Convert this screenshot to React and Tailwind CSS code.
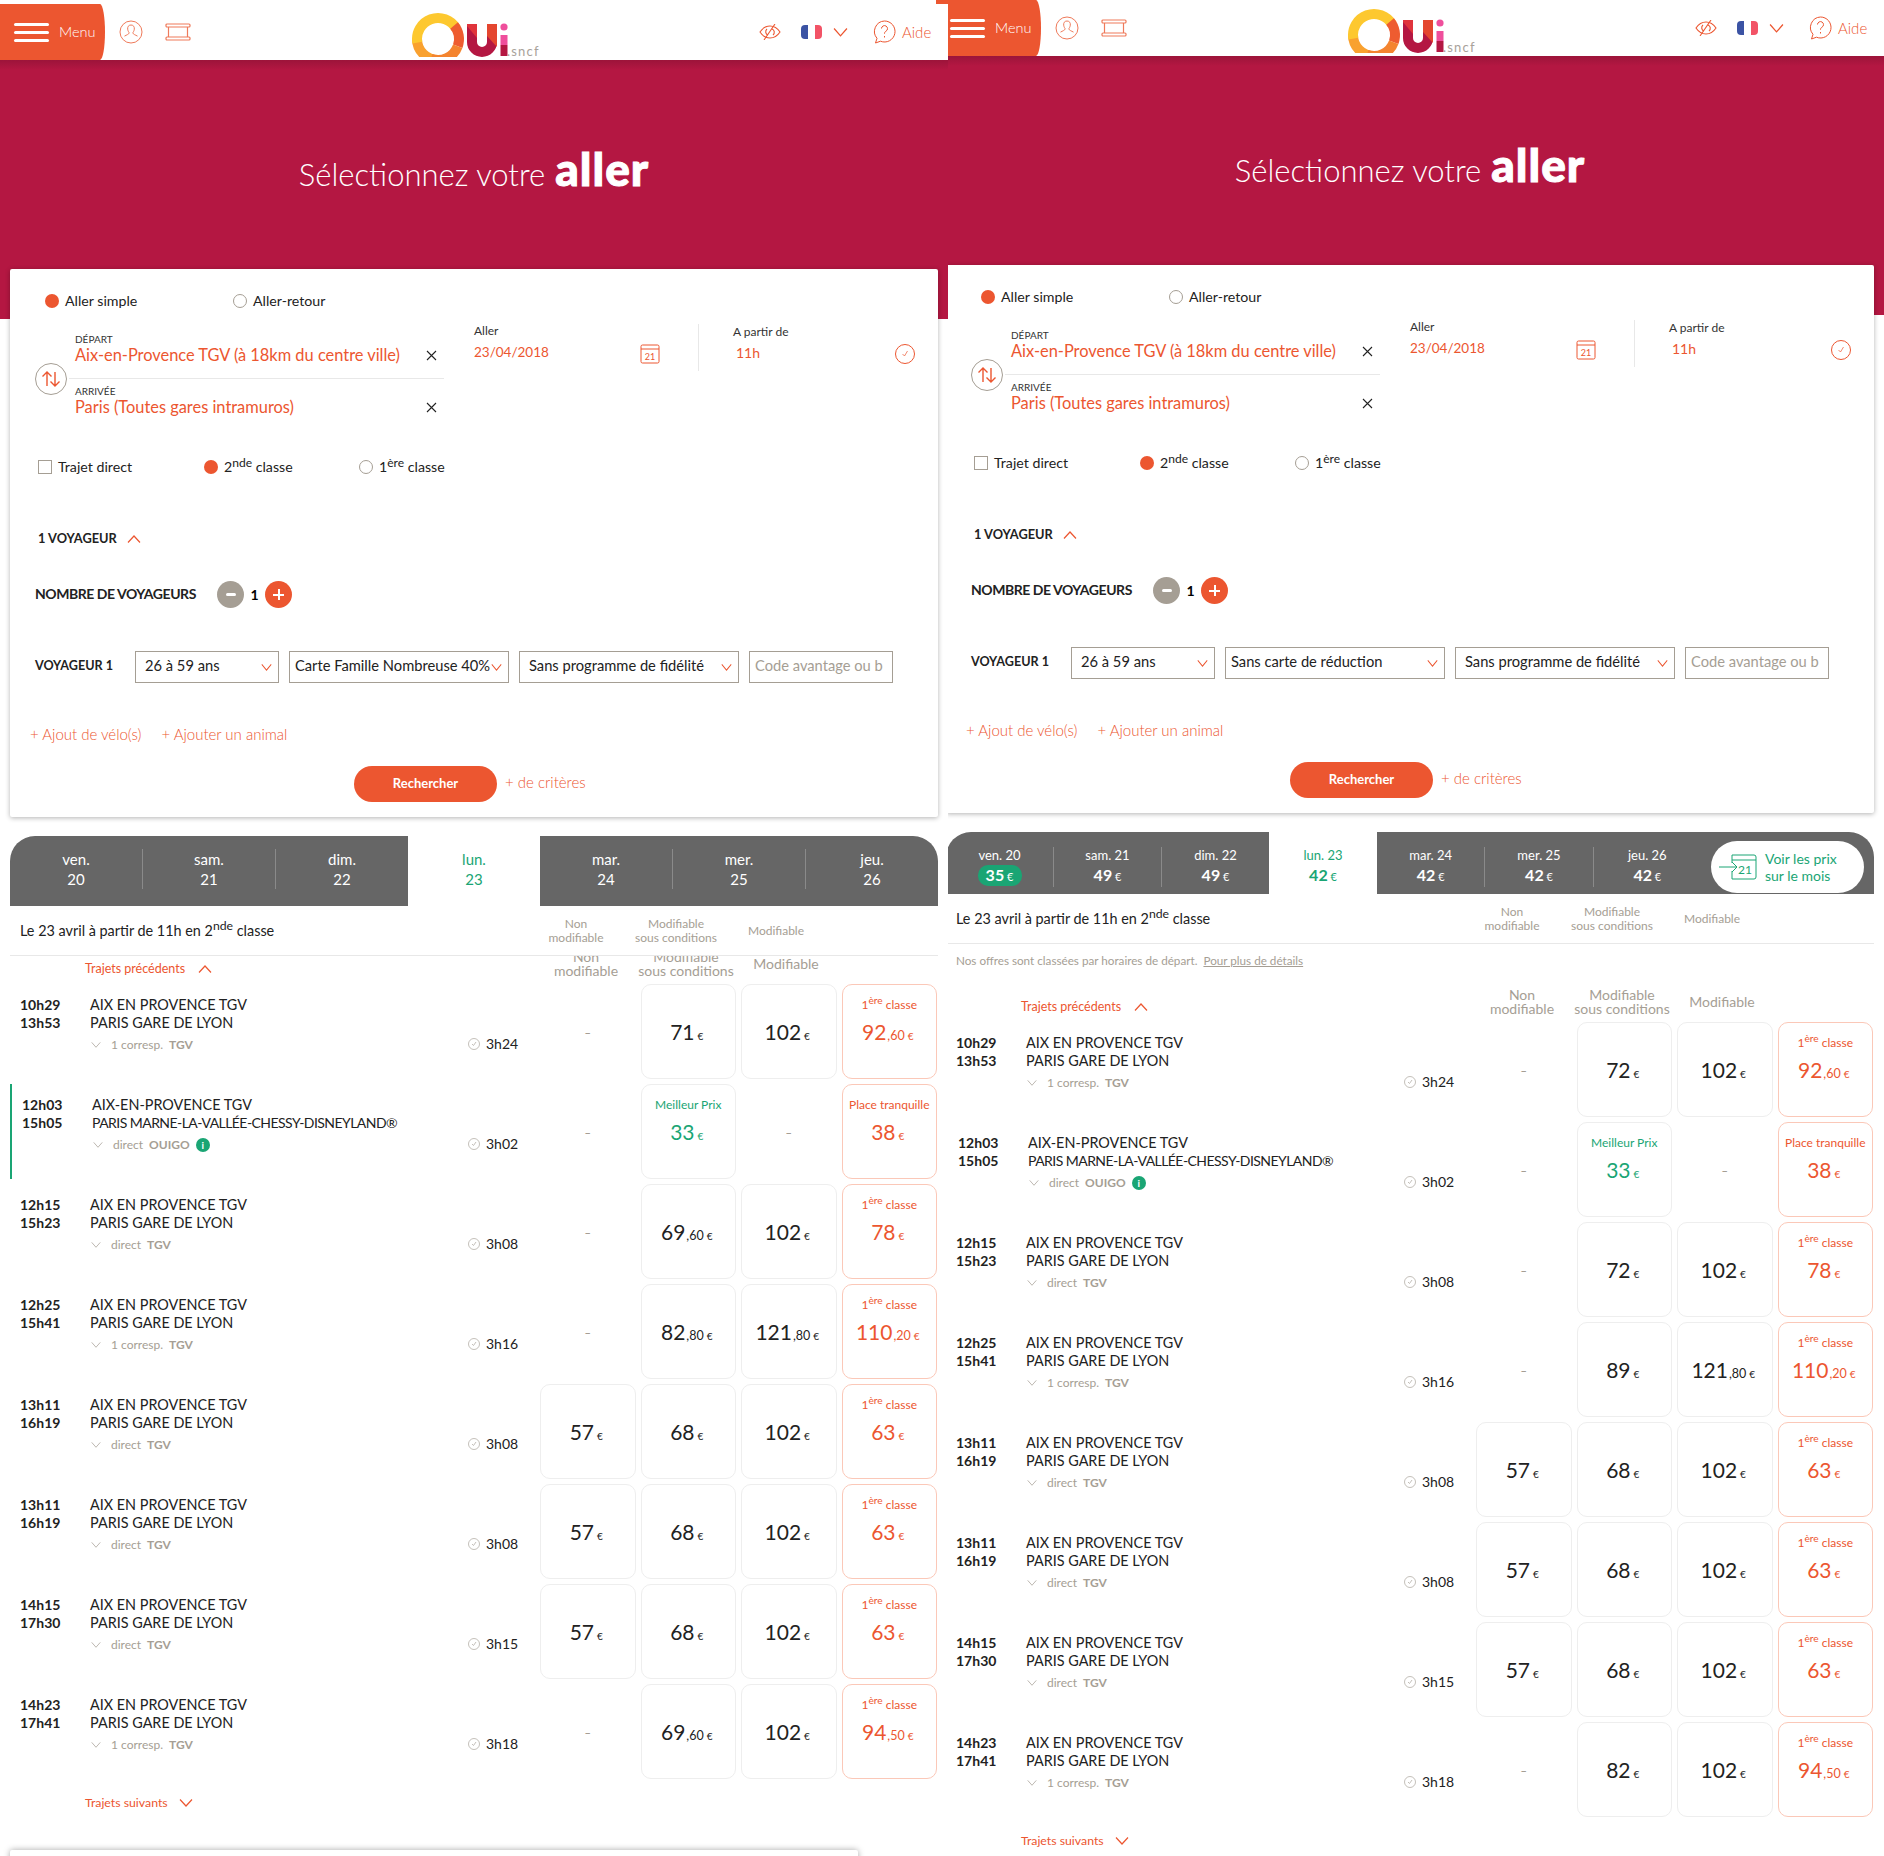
import React from "react";

const Chev = ({ up, w = 14, h = 8, c = "#ec5630", sw = 1.2, className = "" }) => (
  <svg width={w} height={h} viewBox="0 0 14 8" fill="none" preserveAspectRatio="none" className={className}>
    <path d={up ? "M1 7.5 7 1l6 6.5" : "M1 .5 7 7l6-6.5"} stroke={c} strokeWidth={sw} />
  </svg>
);
const Radio = ({ on }) =>
  on ? <span className="block w-[14px] h-[14px] rounded-full bg-[#ec5630] shrink-0" /> : <span className="block w-[14px] h-[14px] rounded-full border border-[#a59e94] shrink-0" />;
const Cross = () => (
  <svg width="11" height="11" viewBox="0 0 11 11" fill="none"><path d="M1 1l9 9M10 1l-9 9" stroke="#222" strokeWidth="1.1" /></svg>
);
const Sup = ({ children }) => <sup className="text-[0.85em] align-baseline relative -top-[0.45em]">{children}</sup>;

function Logo() {
  const arc = (a, b, col) => {
    const r = 21, cx = 28, cy = 27;
    const p = (t) => [cx + r * Math.cos((t * Math.PI) / 180), cy + r * Math.sin((t * Math.PI) / 180)];
    const [x1, y1] = p(a), [x2, y2] = p(b);
    return <path d={`M${x1} ${y1}A${r} ${r} 0 ${b - a > 180 ? 1 : 0} 1 ${x2} ${y2}`} stroke={col} strokeWidth="10" fill="none" />;
  };
  return (
    <svg width="130" height="45" viewBox="0 0 130 45" className="block overflow-visible">
      <defs><clipPath id="lg"><rect width="130" height="45" /></clipPath></defs>
      <g clipPath="url(#lg)">
        {arc(90, 180, "#f9a12f")}
        {arc(170, 330, "#fdc82f")}
        {arc(-40, 20, "#ee5c30")}
        {arc(20, 110, "#f4842f")}
        <path d="M62 12V30a10 10 0 0 0 20 0V12" stroke="#b41742" strokeWidth="10" fill="none" />
        <path d="M77 12h10v23l-10-11z" fill="#e4462f" />
        <path d="M57 14l10 12v-14H57z" fill="#e0343c" />
        <circle cx="94" cy="15" r="3.6" fill="#ef4f9c" />
        <rect x="90.5" y="23" width="7" height="10" fill="#ef4f9c" />
        <rect x="90.5" y="33" width="7" height="11" fill="#b41742" />
      </g>
      <text x="97" y="43.5" fontSize="13" letterSpacing="1.2" fill="#a8a29a" fontFamily="Lato, sans-serif">.sncf</text>
    </svg>
  );
}

function Header() {
  return (
    <div className="h-[56px] bg-white flex items-center relative z-10">
      <div className="h-full w-[105px] bg-[#ec5630] [border-radius:0_5px_5px_0/0_50%_50%_0] flex items-center pl-[14px] gap-[10px]">
        <div className="flex flex-col gap-[5px] w-[35px]">
          <span className="h-[3px] rounded bg-white" /><span className="h-[3px] rounded bg-white" /><span className="h-[3px] rounded bg-white" />
        </div>
        <span className="text-white text-[14.5px] font-light">Menu</span>
      </div>
      <svg width="24" height="24" viewBox="0 0 24 24" fill="none" stroke="#ef7a5a" strokeWidth="1" className="ml-[14px]">
        <circle cx="12" cy="12" r="11" /><path d="M12 5c-2.6 0-3.6 2-3.3 4.2.2 1.6 1 3 1.6 3.7-.6 1.4-2.500 2-4.800 3.200M12 5c2.6 0 3.600 2 3.300 4.200-.2 1.600-1 3-1.600 3.700.6 1.400 2.500 2 4.800 3.200" />
      </svg>
      <svg width="26" height="18" viewBox="0 0 26 18" fill="none" stroke="#ef7a5a" strokeWidth="1.200" className="ml-[22px]">
        <rect x="1" y="1" width="24" height="3" rx="1" /><rect x="1" y="14" width="24" height="3" rx="1" /><path d="M3.500 4v10M22.500 4v10" />
      </svg>
      <div className="ml-[219px] mt-[5px]"><Logo /></div>
      <svg width="22" height="16" viewBox="0 0 22 16" fill="none" stroke="#ec5630" strokeWidth="1.100" className="ml-[219px]">
        <path d="M1 8c3-4.500 6.500-6 10-6s7 1.500 10 6c-3 4.500-6.500 6-10 6S4 12.500 1 8z" /><path d="M8 5a3.500 3.500 0 0 0 1 6M14 11a3.500 3.500 0 0 0-1-6" /><path d="M16 0 5 16" />
      </svg>
      <div className="ml-[20px] w-[21px] h-[14px] rounded-[4px] overflow-hidden flex">
        <span className="flex-1 bg-[#3b53a4]" /><span className="flex-1 bg-white" /><span className="flex-1 bg-[#f25366]" />
      </div>
      <Chev w={15} h={9} className="ml-[11px]" />
      <svg width="23" height="24" viewBox="0 0 23 24" fill="none" stroke="#ec5630" strokeWidth="1" className="ml-[25px]">
        <path d="M11.500 1a10.500 10.500 0 1 1-4 20.200L2.500 23l1.500-4.700A10.500 10.500 0 0 1 11.500 1z" />
        <path d="M8.500 8.500a3 3 0 1 1 4.500 2.700c-1 .6-1.500 1.200-1.500 2.500M11.500 16v1.500" />
      </svg>
      <span className="ml-[6px] text-[15px] text-[#ec5630] font-light">Aide</span>
    </div>
  );
}

function Hero() {
  return (
    <div className="h-[259px] bg-[#b41742] bg-[linear-gradient(#9c143a,#b41742_10px)] flex items-center justify-center pb-[36px]">
      <div className="flex items-baseline gap-[10px] text-white">
        <span className="text-[31px] font-light">Sélectionnez votre</span>
        <span className="text-[46px] font-black leading-none tracking-[1px] [-webkit-text-stroke:1px_white]">aller</span>
      </div>
    </div>
  );
}

const Sel = ({ w, children, px = "pl-[9px]" }) => (
  <div className={`h-[32px] border border-[#a59e94] flex items-center justify-between pr-[6px] text-[14.7px] text-[#222] ${px} ${w}`}>
    <span className="whitespace-nowrap -mt-[3px]">{children}</span>
    <Chev w={11} h={7} />
  </div>
);

function SearchCard({ carte }) {
  return (
    <div className="mx-[10px] -mt-[50px] relative z-10 bg-white rounded-[2px] shadow-[0_1px_5px_rgba(0,0,0,0.3)] flex flex-col h-[548px]">
      <div className="mt-[22px] ml-[35px] h-[20px] flex items-center text-[14.2px] text-[#222]">
        <div className="w-[188px] flex items-center gap-[6px]"><Radio on />Aller simple</div>
        <div className="flex items-center gap-[6px]"><Radio />Aller-retour</div>
      </div>
      <div className="mt-[13px] flex">
        <div className="relative ml-[25px] w-[409px] pl-[34px]">
          <div className="mt-[9px] h-[12px] text-[10px] leading-[12px] pl-[6px] text-[#333]">DÉPART</div>
          <div className="h-[20px] flex items-center justify-between pl-[6px] pr-[7px] text-[16.4px] leading-[18px] text-[#ec5630]">
            <span className="whitespace-nowrap -mt-[1px]">Aix-en-Provence TGV (à 18km du centre ville)</span><Cross />
          </div>
          <div className="mt-[13px] h-px bg-[#e8e8e8]" />
          <div className="mt-[6px] h-[12px] text-[10px] leading-[12px] pl-[6px] text-[#333]">ARRIVÉE</div>
          <div className="h-[20px] flex items-center justify-between pl-[6px] pr-[7px] text-[16.4px] leading-[18px] text-[#ec5630]">
            <span className="-mt-[1px]">Paris (Toutes gares intramuros)</span><Cross />
          </div>
          <div className="absolute left-0 top-[39px] w-[32px] h-[32px] rounded-full border border-[#a59e94] bg-white flex items-center justify-center">
            <svg width="20" height="18" viewBox="0 0 20 18" fill="none" stroke="#ec5630" strokeWidth="1.400">
              <path d="M6 16V2M1.500 6.500 6 2l4.500 4.500M14 2v14M9.500 11.500 14 16l4.500-4.500" />
            </svg>
          </div>
        </div>
        <div className="ml-[30px] w-[224px] flex flex-col">
          <div className="h-[14px] text-[12px] leading-[14px] text-[#333]">Aller</div>
          <div className="mt-[6px] h-[20px] flex items-center justify-between pr-[38px] text-[13.5px] text-[#ec5630]">
            <span className="-mt-[3px]">23/04/2018</span>
            <svg width="20" height="20" viewBox="0 0 20 20" fill="none" stroke="#ec5630" strokeWidth="1"><rect x="1" y="1" width="18" height="18" rx="1.500" /><path d="M1 5h18" /><text x="10" y="15.500" fontSize="9" textAnchor="middle" fill="#ec5630" stroke="none" fontFamily="Lato, sans-serif">21</text></svg>
          </div>
        </div>
        <div className="w-px h-[47px] bg-[#e8e8e8]" />
        <div className="pl-[34px] w-[216px]">
          <div className="h-[14px] text-[12px] leading-[16px] text-[#333]">A partir de</div>
          <div className="mt-[6px] h-[20px] pl-[3px] flex items-center justify-between text-[14px] text-[#ec5630]">
            <span className="-mt-[3px]">11h</span>
            <svg width="20" height="20" viewBox="0 0 20 20" fill="none" stroke="#ec5630" strokeWidth="1"><circle cx="10" cy="10" r="9.500" /><path d="M7.500 10 9.500 12 12.500 7" strokeWidth=".7" /></svg>
          </div>
        </div>
      </div>
      <div className="mt-[40px] ml-[28px] h-[20px] flex items-center text-[14.2px] text-[#222]">
        <div className="w-[166px] flex items-center gap-[6px]"><span className="w-[14px] h-[14px] border border-[#a59e94]" />Trajet direct</div>
        <div className="w-[155px] flex items-center gap-[6px]"><Radio on /><span>2<Sup>nde</Sup> classe</span></div>
        <div className="flex items-center gap-[6px]"><Radio /><span>1<Sup>ère</Sup> classe</span></div>
      </div>
      <div className="mt-[54px] ml-[28px] h-[16px] flex items-center gap-[10px] text-[12.8px] font-bold text-[#222]">1 VOYAGEUR <Chev up w={14} h={8} /></div>
      <div className="mt-[34px] ml-[25px] h-[27px] flex items-center">
        <div className="w-[182px] text-[14px] font-bold text-[#222] tracking-[-0.45px] -mt-[3px]">NOMBRE DE VOYAGEURS</div>
        <div className="w-[27px] h-[27px] rounded-full bg-[#a59e94] flex items-center justify-center"><span className="w-[10px] h-[3px] bg-white rounded" /></div>
        <span className="w-[21px] text-center text-[14px] font-bold">1</span>
        <div className="w-[27px] h-[27px] rounded-full bg-[#ec5630] relative flex items-center justify-center">
          <span className="w-[11px] h-[2px] bg-white" /><span className="absolute w-[2px] h-[11px] bg-white" />
        </div>
      </div>
      <div className="mt-[43px] ml-[25px] h-[32px] flex items-center gap-[10px]">
        <div className="w-[90px] text-[12.6px] font-bold text-[#222] -mt-[2px]">VOYAGEUR 1</div>
        <Sel w="w-[144px]">26 à 59 ans</Sel>
        <Sel w="w-[220px]" px="pl-[5px]">{carte}</Sel>
        <Sel w="w-[220px]">Sans programme de fidélité</Sel>
        <div className="w-[144px] h-[32px] border border-[#a59e94] flex items-center pb-[3px] pl-[5px] text-[14.7px] text-[#a59e94] whitespace-nowrap overflow-hidden">Code avantage ou b</div>
      </div>
      <div className="mt-[41px] ml-[20px] h-[20px] flex items-center gap-[20px] text-[15px] text-[#ec5630] font-light">
        <span>+ Ajout de vélo(s)</span><span>+ Ajouter un animal</span>
      </div>
      <div className="mt-[22px] ml-[344px] flex items-center gap-[8px]">
        <div className="w-[143px] h-[36px] rounded-[18px] bg-[#ec5630] text-white text-[13px] font-bold flex items-center justify-center">Rechercher</div>
        <span className="text-[15px] text-[#ec5630] font-light -mt-[3px]">+ de critères</span>
      </div>
    </div>
  );
}

const Div = ({ low }) => <div className={`w-px h-[40px] bg-[#8a8a8a] shrink-0 ${low ? "mt-[8px]" : ""}`} />;
const Eu = ({ v }) => <span className="text-[16px] font-bold leading-none">{v}<span className="text-[11px] font-normal"> €</span></span>;

function DayL({ a, b, green }) {
  return (
    <div className={`flex-1 flex flex-col items-center text-[15px] leading-[20px] ${green ? "text-[#1aa574]" : "text-white"}`}>
      <span>{a}</span><span>{b}</span>
    </div>
  );
}
function DayR({ a, p, green, best }) {
  return (
    <div className={`flex-1 flex flex-col items-center gap-[1px] mt-[5px] ${green ? "text-[#1aa574]" : "text-white"}`}>
      <span className="text-[13px] leading-[18px]">{a}</span>
      {best ? <span className="w-[44px] h-[21px] rounded-[10px] bg-[#1aa574] flex items-center justify-center"><Eu v={p} /></span> : <span className="h-[21px] flex items-center"><Eu v={p} /></span>}
    </div>
  );
}

function StripLeft() {
  return (
    <div className="mx-[10px] mt-[19px] h-[70px] flex">
      <div className="w-[398px] bg-[#666] rounded-tl-[25px] flex items-center pb-[5px]">
        <DayL a="ven." b="20" /><Div /><DayL a="sam." b="21" /><Div /><DayL a="dim." b="22" />
      </div>
      <div className="w-[132px] flex items-start pt-[13px]"><DayL a="lun." b="23" green /></div>
      <div className="flex-1 bg-[#666] rounded-tr-[25px] flex items-center pb-[5px]">
        <DayL a="mar." b="24" /><Div /><DayL a="mer." b="25" /><Div /><DayL a="jeu." b="26" />
      </div>
    </div>
  );
}
function StripRight() {
  return (
    <div className="mx-[10px] mt-[19px] h-[62px] flex">
      <div className="w-[323px] bg-[#666] rounded-tl-[25px] flex items-center">
        <DayR a="ven. 20" p="35" best /><Div low /><DayR a="sam. 21" p="49" /><Div low /><DayR a="dim. 22" p="49" />
      </div>
      <div className="w-[108px] flex items-center"><DayR a="lun. 23" p="42" green /></div>
      <div className="flex-1 bg-[#666] rounded-tr-[25px] flex items-center pr-[10px]">
        <div className="w-[324px] flex items-center">
          <DayR a="mar. 24" p="42" /><Div low /><DayR a="mer. 25" p="42" /><Div low /><DayR a="jeu. 26" p="42" />
        </div>
        <div className="ml-[10px] mt-[8px] w-[153px] h-[52px] rounded-[26px] bg-white flex items-center pl-[7px] gap-[7px] text-[14px] leading-[17px] text-[#1aa574]">
          <svg width="40" height="28" viewBox="0 0 40 28" fill="none" stroke="#1aa574" strokeWidth="1">
            <path d="M14 2h22a2 2 0 0 1 2 2v20a2 2 0 0 1-2 2H14M14 2v8M14 18v8M14 7h24" />
            <path d="M1 14h18M14 9l5 5-5 5" />
            <text x="27" y="21" fontSize="12" textAnchor="middle" fill="#1aa574" stroke="none" fontFamily="Lato, sans-serif">21</text>
          </svg>
          <span>Voir les prix<br />sur le mois</span>
        </div>
      </div>
    </div>
  );
}

function HeadCols({ size, lh }) {
  return (
    <div className={`flex text-[#a59e94] text-center font-normal ${size} ${lh}`}>
      <div className="w-[100px] h-[28px] flex items-center justify-center"><span>Non<br />modifiable</span></div>
      <div className="w-[100px] h-[28px] flex items-center justify-center"><span className="whitespace-nowrap">Modifiable<br />sous conditions</span></div>
      <div className="w-[100px] h-[28px] flex items-center justify-center">Modifiable</div>
    </div>
  );
}

function Price({ p }) {
  if (p === null) return <div className="w-[95.5px] h-[95px] flex items-start justify-center pt-[42px] text-[11px] leading-[14px] font-bold text-[#a59e94]">–</div>;
  const { v, c, label, kind } = p;
  const red = kind === "first" || kind === "tq";
  const green = kind === "best";
  const col = red ? "text-[#ec5630]" : green ? "text-[#1aa574]" : "text-[#222]";
  return (
    <div className={`w-[95.5px] h-[95px] rounded-[10px] border bg-white flex flex-col items-center pt-[10px] ${red ? "border-[#fbc8b8]" : "border-[#eeeeee]"} ${col}`}>
      <div className="h-[20px] text-[12px] leading-[20px] whitespace-nowrap">
        {kind === "first" ? <span>1<Sup>ère</Sup> classe</span> : label}
      </div>
      <div className="mt-[2px] pr-[3px] h-[30px] flex items-baseline justify-center leading-[30px] whitespace-nowrap">
        <span className="text-[21px]">{v}</span>
        {c ? <span className="text-[12.5px] ml-[1px]">,{c}</span> : null}
        <span className="text-[10px] ml-[3px]">€</span>
      </div>
    </div>
  );
}

const A = "AIX EN PROVENCE TGV", G = "PARIS GARE DE LYON";
const n = (v, c) => ({ v, c });
const f = (v, c) => ({ v, c, kind: "first" });
const base = [
  { t: ["10h29", "13h53"], d: "1 corresp.", tr: "TGV", dur: "3h24" },
  { t: ["12h03", "15h05"], s: ["AIX-EN-PROVENCE TGV", "PARIS MARNE-LA-VALLÉE-CHESSY-DISNEYLAND®"], d: "direct", tr: "OUIGO", dur: "3h02", ouigo: true },
  { t: ["12h15", "15h23"], d: "direct", tr: "TGV", dur: "3h08" },
  { t: ["12h25", "15h41"], d: "1 corresp.", tr: "TGV", dur: "3h16" },
  { t: ["13h11", "16h19"], d: "direct", tr: "TGV", dur: "3h08" },
  { t: ["13h11", "16h19"], d: "direct", tr: "TGV", dur: "3h08" },
  { t: ["14h15", "17h30"], d: "direct", tr: "TGV", dur: "3h15" },
  { t: ["14h23", "17h41"], d: "1 corresp.", tr: "TGV", dur: "3h18" },
];
const best33 = { v: "33", kind: "best", label: "Meilleur Prix" };
const tq38 = { v: "38", kind: "tq", label: "Place tranquille" };
const low = [n("57"), n("68"), n("102"), f("63")];
const pricesL = [
  [null, n("71"), n("102"), f("92", "60")],
  [null, best33, null, tq38],
  [null, n("69", "60"), n("102"), f("78")],
  [null, n("82", "80"), n("121", "80"), f("110", "20")],
  low, low, low,
  [null, n("69", "60"), n("102"), f("94", "50")],
];
const pricesR = [
  [null, n("72"), n("102"), f("92", "60")],
  [null, best33, null, tq38],
  [null, n("72"), n("102"), f("78")],
  [null, n("89"), n("121", "80"), f("110", "20")],
  low, low, low,
  [null, n("82"), n("102"), f("94", "50")],
];

function Row({ r, prices }) {
  return (
    <div className={`ml-[10px] h-[95px] mb-[5px] flex ${r.ouigo ? "border-l-2 border-[#1aa574] pl-[10px]" : "pl-[10px]"}`}>
      <div className="w-[70px] pt-[12px] text-[14px] leading-[18px] font-bold text-[#222]"><div>{r.t[0]}</div><div>{r.t[1]}</div></div>
      <div className={`${r.ouigo ? "w-[376px]" : "w-[378px]"} pt-[12px] text-[14.4px] leading-[18px] text-[#222]`}>
        <div>{r.s ? r.s[0] : A}</div><div className={r.s ? "tracking-[-0.55px] text-[14px]" : ""}>{r.s ? r.s[1] : G}</div>
        <div className="mt-[4px] h-[18px] flex items-center text-[12px] text-[#a59e94]">
          <Chev w={10} h={6} c="#a59e94" sw={1} className="mr-[10px] ml-px" />
          <span>{r.d}</span><span className="ml-[6px] font-bold">{r.tr}</span>
          {r.ouigo ? <span className="ml-[6px] w-[14px] h-[14px] rounded-full bg-[#1aa574] text-white text-[10px] font-bold flex items-center justify-center">i</span> : null}
        </div>
      </div>
      <div className="w-[72px] pt-[51px] flex items-start gap-[6px] text-[14px] leading-[18px] text-[#222]">
        <svg width="12" height="12" viewBox="0 0 12 12" fill="none" stroke="#b5b0a8" strokeWidth=".8" className="mt-[3px]"><circle cx="6" cy="6" r="5.500" /><path d="M4 6l1.500 1.500L8 4" /></svg>
        <span>{r.dur}</span>
      </div>
      <div className="flex gap-[5px]">{prices.map((p, i) => <Price key={i} p={p} />)}</div>
    </div>
  );
}

function Screen({ right }) {
  const prices = right ? pricesR : pricesL;
  return (
    <div className="w-[948px] shrink-0">
      <Header />
      <Hero />
      <SearchCard carte={right ? "Sans carte de réduction" : "Carte Famille Nombreuse 40%"} />
      {right ? <StripRight /> : <StripLeft />}
      <div className="relative z-10 mx-[10px] h-[50px] bg-white border-b border-[#e8e8e8] flex items-center pr-[112px]">
        <div className="flex-1 pl-[10px] text-[14.4px] text-[#222]">Le 23 avril à partir de 11h en 2<Sup>nde</Sup> classe</div>
        <div className="w-[300px]"><HeadCols size="text-[12px]" lh="leading-[14px]" /></div>
      </div>
      {right ? (
        <div className="mx-[10px] h-[34px] flex items-center pl-[10px] text-[11.7px] text-[#a59e94]">
          Nos offres sont classées par horaires de départ.<span className="ml-[6px] underline">Pour plus de détails</span>
        </div>
      ) : null}
      <div className={`mx-[10px] ${right ? "h-[44px]" : "h-[28px]"} overflow-hidden flex items-end`}>
        <div className="ml-[75px] w-[451px] h-[30px] flex items-center gap-[13px] text-[12.5px] text-[#ec5630]">
          Trajets précédents <Chev up />
        </div>
        <div className="pb-[6px]"><HeadCols size="text-[14px]" lh="leading-[14px]" /></div>
      </div>
      {base.map((r, i) => <Row key={i} r={r} prices={prices[i]} />)}
      <div className="ml-[85px] h-[38px] flex items-center gap-[11px] text-[12.3px] text-[#ec5630]">Trajets suivants <Chev /></div>
      {!right ? <div className="mt-[28px] ml-[10px] w-[848px] h-[60px] bg-white rounded-[2px] shadow-[0_0_6px_rgba(0,0,0,0.35)]" /> : null}
    </div>
  );
}

export default function App() {
  return (
    <div className="w-[1884px] h-[1856px] overflow-hidden flex bg-white [font-family:Lato,sans-serif]">
      <div className="w-[948px] h-[1852px] mt-[4px] shrink-0 overflow-hidden relative z-20 bg-white"><Screen /></div>
      <div className="w-[948px] h-full shrink-0 -ml-[12px]"><Screen right /></div>
    </div>
  );
}
